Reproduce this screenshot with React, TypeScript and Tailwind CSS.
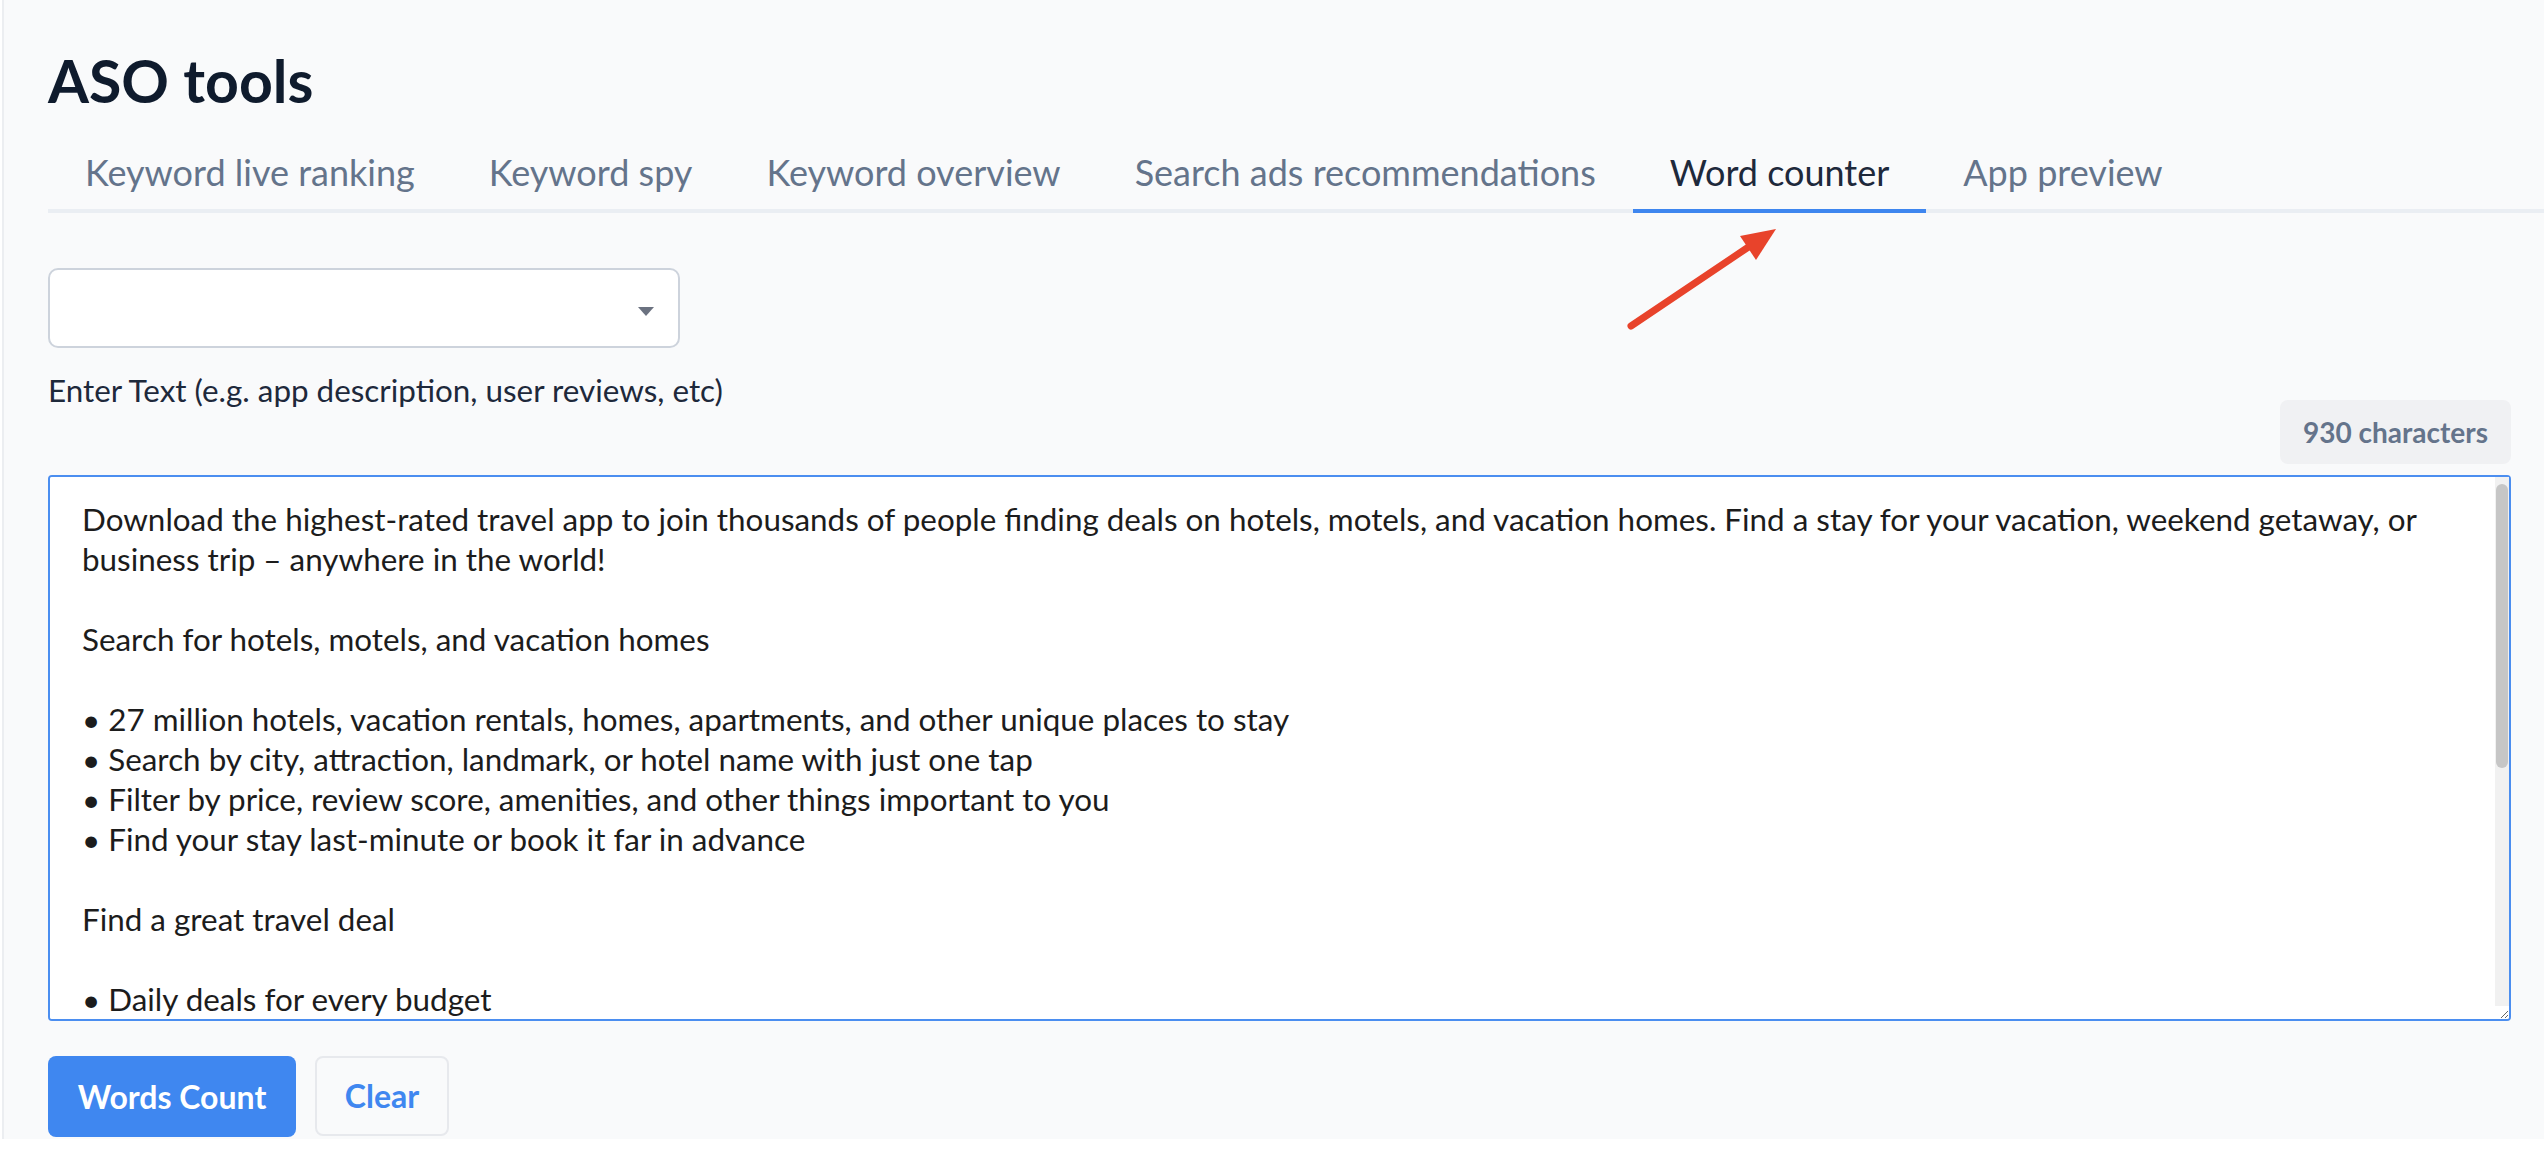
import { useState } from 'react'

const TABS = [
  'Keyword live ranking',
  'Keyword spy',
  'Keyword overview',
  'Search ads recommendations',
  'Word counter',
  'App preview',
]

const SAMPLE_TEXT = `Download the highest-rated travel app to join thousands of people finding deals on hotels, motels, and vacation homes. Find a stay for your vacation, weekend getaway, or business trip – anywhere in the world!

Search for hotels, motels, and vacation homes

• 27 million hotels, vacation rentals, homes, apartments, and other unique places to stay
• Search by city, attraction, landmark, or hotel name with just one tap
• Filter by price, review score, amenities, and other things important to you
• Find your stay last-minute or book it far in advance

Find a great travel deal

• Daily deals for every budget
• Save 10% or more at participating properties with Genius
• Get instant discounts with mobile-only rates

Book and manage your stay

• Book in seconds – no booking fees
• Free cancellation on most rooms
• Manage your bookings on the go
• Contact properties directly from the app
• Pay at the property or pay in advance
`

export default function App() {
  const [active, setActive] = useState('Word counter')
  const [text, setText] = useState(SAMPLE_TEXT)

  return (
    <div className="bg-white pl-[2px] font-[Lato,'Open_Sans',sans-serif]">
      <div className="relative border-l-2 border-[#eceef1] bg-[#f9fafb] pl-[44px] pr-[33px] pt-[45px] pb-[2px]">
        {/* Header */}
        <h1 className="text-[59px] font-bold leading-[72px] text-[#0f1b2d]">ASO tools</h1>

        {/* Tabs */}
        <div className="mt-[30px] mr-[-33px] flex border-b-4 border-[#eaeef3]">
          {TABS.map((tab) => (
            <button
              key={tab}
              onClick={() => setActive(tab)}
              className={
                tab === active
                  ? 'mb-[-4px] border-b-4 border-[#3e86ef] px-[37px] pt-[3px] pb-[15px] text-[36px] leading-[44px] text-[#1e293b]'
                  : 'mb-[-4px] border-b-4 border-transparent px-[37px] pt-[3px] pb-[15px] text-[36px] leading-[44px] text-[#64748b]'
              }
            >
              {tab}
            </button>
          ))}
        </div>

        {/* Arrow pointing at active tab */}
        <svg
          className="pointer-events-none absolute left-[1600px] top-[200px]"
          width="200"
          height="150"
          viewBox="0 0 200 150"
        >
          <line x1="27" y1="126" x2="146" y2="46" stroke="#e8432b" strokeWidth="7" strokeLinecap="round" />
          <polygon points="172,29 136,36 152,60" fill="#e8432b" />
        </svg>

        {/* Language select */}
        <div className="relative mt-[55px] flex h-[80px] w-[632px] items-center rounded-[10px] border-2 border-[#cdd3dc] bg-white">
          <svg className="absolute right-[24px] top-[37px]" width="16" height="10" viewBox="0 0 16 10">
            <polygon points="0,0 16,0 8,9" fill="#6b7280" />
          </svg>
        </div>

        <p className="mt-[32px] text-[31.4px] leading-[20px] text-[#1e293b]">
          Enter Text (e.g. app description, user reviews, etc)
        </p>

        <div className="flex justify-end">
          <div className="flex h-[64px] items-center rounded-[8px] bg-[#f0f1f3] px-[23px] text-[28px] font-bold text-[#64748b]">
            {text.length} characters
          </div>
        </div>

        {/* Text input */}
        <div className="relative mt-[11px]">
          <textarea
            value={text}
            onChange={(e) => setText(e.target.value)}
            spellCheck={false}
            className="block h-[546px] w-full rounded-[4px] border-2 border-[#4b8ef0] bg-white pl-[32px] pr-[46px] pt-[22px] pb-[22px] text-[31.4px] leading-[40px] text-[#1c1c1c] outline-none [scrollbar-width:none]"
          />
          {/* scrollbar */}
          <div className="pointer-events-none absolute right-[2px] top-[2px] h-[529px] w-[14px] bg-[#f1f1f1] px-[1px] pt-[7px]">
            <div className="h-[284px] w-full rounded-full bg-[#c6c6c6]" />
          </div>
        </div>

        {/* Actions */}
        <div className="mt-[35px] flex gap-[19px]">
          <button className="h-[81px] w-[248px] rounded-[8px] bg-[#3f87f0] text-[32px] font-bold text-white">
            Words Count
          </button>
          <button
            onClick={() => setText('')}
            className="h-[80px] w-[134px] rounded-[8px] border-2 border-[#e7e9ed] bg-[#f9fafb] text-[32px] font-bold text-[#3f87f0]"
          >
            Clear
          </button>
        </div>
      </div>
    </div>
  )
}
